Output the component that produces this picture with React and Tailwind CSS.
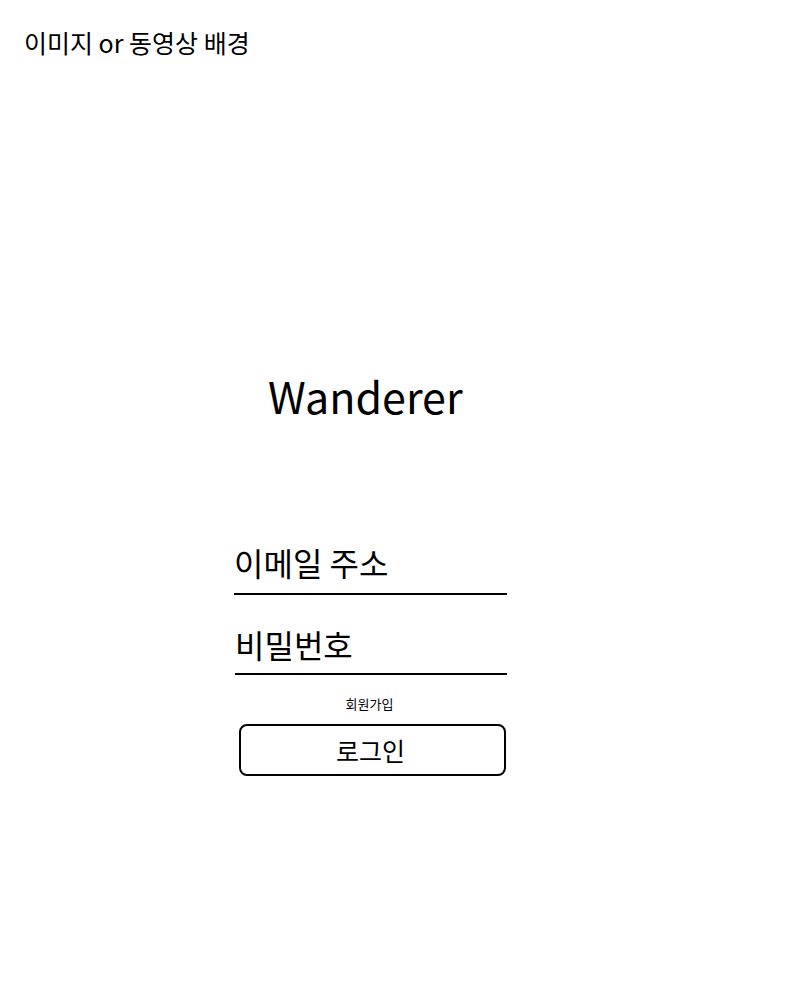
import React from 'react';

const font = { fontFamily: '"Noto Sans CJK KR", "Open Sans", sans-serif' };

export default function App() {
  return (
    <div className="min-h-[1000px] w-[800px] bg-white text-black" style={font}>
      {/* Background placeholder label */}
      <div className="pl-[24px] pt-[24px] text-[25px] leading-[36px]">이미지 or 동영상 배경</div>

      <div className="ml-[234px] w-[273px] flex flex-col">
        {/* Title */}
        <h1 className="mt-[305px] pl-[34px] text-[43px] leading-[60px] font-normal">Wanderer</h1>

        {/* Email field */}
        <div className="mt-[117px] border-b-2 border-black pb-[11px]">
          <span className="text-[32px] leading-[40px] block">이메일 주소</span>
        </div>

        {/* Password field */}
        <div className="mt-[29px] ml-[1px] border-b-2 border-black pb-[9px]">
          <span className="text-[32px] leading-[40px] block">비밀번호</span>
        </div>

        <div className="mt-[20px] text-center text-[13px] leading-[18px] pr-[2px]">회원가입</div>

        <button className="mt-[11px] ml-[5px] h-[52px] w-[267px] rounded-[8px] border-2 border-black text-[25px] leading-none flex items-center justify-center pr-[4px]">
          로그인
        </button>
      </div>
    </div>
  );
}
